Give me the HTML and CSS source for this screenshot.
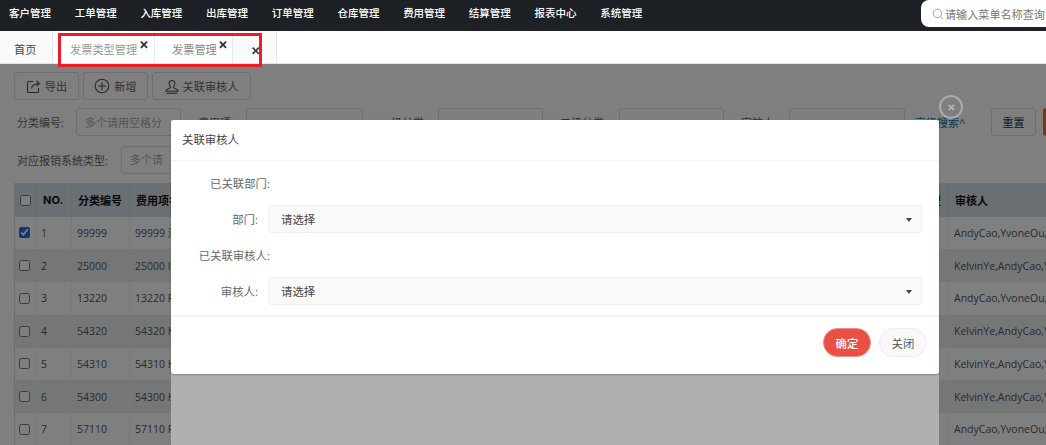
FILE: index.html
```html
<!DOCTYPE html>
<html lang="en">
<head>
    <meta charset="UTF-8">
    <meta name="viewport" content="width=device-width, initial-scale=1.0">
    <title>发票类型管理</title>
    <link rel="stylesheet" href="styles.css">
</head>
<body>
    <!-- Top menu -->
    <div class="topbar">
        <div class="menu">
            <a>客户管理</a>
            <a>工单管理</a>
            <a>入库管理</a>
            <a>出库管理</a>
            <a>订单管理</a>
            <a>仓库管理</a>
            <a>费用管理</a>
            <a>结算管理</a>
            <a>报表中心</a>
            <a>系统管理</a>
        </div>
        <div class="menu-search">
            <svg width="12" height="12" viewBox="0 0 13 13" fill="none" stroke="#999" stroke-width="1"><circle cx="5.8" cy="5.8" r="4.6"/><path d="M9.2 9.2 12 12"/></svg>
            <span>请输入菜单名称查询</span>
        </div>
    </div>

    <!-- Tabs -->
    <div class="tabs">
        <div class="tab tab-home">首页</div>
        <div class="tab tab-first">发票类型管理
            <svg class="tab-x" viewBox="0 0 8 8"><path d="M1.4 0 4 2.6 6.6 0 8 1.4 5.4 4 8 6.6 6.6 8 4 5.4 1.4 8 0 6.6 2.6 4 0 1.4z"/></svg>
        </div>
        <div class="tab tab-second">发票管理
            <svg class="tab-x" viewBox="0 0 8 8"><path d="M1.4 0 4 2.6 6.6 0 8 1.4 5.4 4 8 6.6 6.6 8 4 5.4 1.4 8 0 6.6 2.6 4 0 1.4z"/></svg>
        </div>
        <div class="tab tab-more">
            <svg class="more-x" viewBox="0 0 8 8"><path d="M1.4 0 4 2.6 6.6 0 8 1.4 5.4 4 8 6.6 6.6 8 4 5.4 1.4 8 0 6.6 2.6 4 0 1.4z"/></svg>
        </div>
    </div>

    <!-- Page behind the dialog -->
    <div class="content">
        <div class="toolbar">
            <button class="tool-btn btn-export">
                <svg width="15" height="15" viewBox="0 0 15 15" fill="none" stroke="#555" stroke-width="1.1"><path d="M7 2.5H2.5a1 1 0 0 0-1 1v9a1 1 0 0 0 1 1h9a1 1 0 0 0 1-1V9"/><path d="M5.5 9.5c.4-3 2.500-4.700 7.500-5M10.500 1.800 13.300 4.500 10.500 7"/></svg>
                导出
            </button>
            <button class="tool-btn btn-add">
                <svg width="16" height="16" viewBox="0 0 16 16" fill="none" stroke="#555" stroke-width="1.1"><circle cx="8" cy="8" r="6.800"/><path d="M8 4v8M4 8h8"/></svg>
                新增
            </button>
            <button class="tool-btn btn-link">
                <svg width="14" height="15" viewBox="0 0 14 15" fill="none" stroke="#555" stroke-width="1.1"><path d="M7 1.500c-1.700 0-2.800 1.200-2.800 2.800 0 2 1.300 2.600 1.300 3.900 0 1-1 1.300-2.500 1.800C1.800 10.400 1 11 1 12.300h12c0-1.300-.8-1.900-2-2.300-1.500-.5-2.500-.8-2.500-1.800 0-1.300 1.300-1.900 1.300-3.900C9.800 2.700 8.700 1.500 7 1.500z"/><path d="M1.500 14.300h11"/></svg>
                关联审核人
            </button>
        </div>

        <div class="filters">
            <label class="f-label">分类编号:</label>
            <input class="f-input" placeholder="多个请用空格分">
            <label class="f-label">费用项</label>
            <input class="f-input">
            <label class="f-label">一级分类</label>
            <input class="f-input">
            <label class="f-label">二级分类</label>
            <input class="f-input">
            <label class="f-label">审核人</label>
            <input class="f-input">
            <a class="f-more">高级搜索^</a>
            <button class="f-reset">重置</button>
            <button class="f-search" aria-label="搜索"></button>
        </div>

        <div class="filters-second">
            <label class="f-label">对应报销系统类型:</label>
            <input class="f-input f-input-wide" placeholder="多个请">
        </div>

        <table class="grid">
            <colgroup>
                <col class="c-check"><col class="c-no"><col class="c-code"><col class="c-name"><col class="c-type"><col class="c-user">
            </colgroup>
            <thead>
                <tr><th><input type="checkbox"></th><th class="th-no">NO.</th><th>分类编号</th><th>费用项名称</th><th class="th-type">系统类型</th><th>审核人</th></tr>
            </thead>
            <tbody>
                <tr><td><input type="checkbox" checked></td><td>1</td><td>99999</td><td>99999 测试</td><td></td><td>AndyCao,YvoneOu,JackZhang</td></tr>
                <tr><td><input type="checkbox"></td><td>2</td><td>25000</td><td>25000 Ins</td><td></td><td>KelvinYe,AndyCao,YvoneOu</td></tr>
                <tr><td><input type="checkbox"></td><td>3</td><td>13220</td><td>13220 Pay</td><td></td><td>AndyCao,YvoneOu,JackZhang</td></tr>
                <tr><td><input type="checkbox"></td><td>4</td><td>54320</td><td>54320 Hot</td><td></td><td>KelvinYe,AndyCao,YvoneOu</td></tr>
                <tr><td><input type="checkbox"></td><td>5</td><td>54310</td><td>54310 Hot</td><td></td><td>KelvinYe,AndyCao,YvoneOu</td></tr>
                <tr><td><input type="checkbox"></td><td>6</td><td>54300</td><td>54300 Hot</td><td></td><td>KelvinYe,AndyCao,YvoneOu</td></tr>
                <tr><td><input type="checkbox"></td><td>7</td><td>57110</td><td>57110 Ren</td><td></td><td>AndyCao,YvoneOu,JackZhang</td></tr>
            </tbody>
        </table>
    </div>

    <div class="backdrop"></div>

    <!-- Dialog -->
    <div class="modal-wrap">
        <div class="dialog">
            <div class="dialog-head">关联审核人</div>
            <div class="dialog-body">
                <div class="d-row"><span class="d-label">已关联部门:</span></div>
                <div class="d-row d-row-select">
                    <span class="d-label d-label-short">部门:</span>
                    <div class="d-select">请选择<i class="caret"></i></div>
                </div>
                <div class="d-row"><span class="d-label">已关联审核人:</span></div>
                <div class="d-row d-row-select">
                    <span class="d-label d-label-short">审核人:</span>
                    <div class="d-select">请选择<i class="caret"></i></div>
                </div>
            </div>
            <div class="dialog-foot">
                <button class="btn-ok">确定</button>
                <button class="btn-close">关闭</button>
            </div>
        </div>
    </div>

    <div class="modal-close">
        <svg width="9" height="9" viewBox="0 0 10 10" stroke="#b4b4b4" stroke-width="2"><path d="M2 2l6 6M8 2l-6 6"/></svg>
    </div>

    <!-- Red marker drawn on the screenshot -->
    <div class="marker"></div>
</body>
</html>
```

FILE: styles.css
```css
* {
    box-sizing: border-box;
}

body {
    font-family: "Open Sans", "Noto Sans CJK SC", sans-serif;
    font-size: 11px;
    color: #666;
    margin: 0;
    height: 445px;
    overflow: hidden;
    position: relative;
    background-color: #fff;
}

/* Top menu */
.topbar {
    height: 31px;
    background-color: #1d2125;
    display: flex;
    justify-content: space-between;
    align-items: flex-start;
}

.menu {
    display: flex;
    padding-left: 9px;
    gap: 24.400px;
}

.menu a {
    color: #fff;
    font-size: 10.500px;
    font-weight: 500;
    line-height: 27px;
    width: 41.300px;
    white-space: nowrap;
}

.menu-search {
    width: 125px;
    height: 27px;
    background-color: #fff;
    border-radius: 8px 0 0 8px;
    display: flex;
    align-items: center;
    padding-left: 11px;
    gap: 1px;
    color: #777;
    font-size: 11.100px;
    white-space: nowrap;
}

.menu-search svg {
    flex: none;
}

/* Tabs */
.tabs {
    height: 33px;
    display: flex;
    border-bottom: 1px solid #e4e4e4;
}

.tab {
    position: relative;
    font-size: 11.200px;
    line-height: 37px;
    border-right: 1px solid #e6e9f0;
    background-color: #fafafa;
    color: #444;
}

.tab-home {
    width: 53px;
    padding-left: 14px;
}

.tab-first {
    width: 102px;
    padding-left: 17px;
    background-color: #fff;
    color: #999;
}

.tab-second {
    width: 78px;
    padding-left: 17px;
    background-color: #fff;
    color: #888;
}

.tab-more {
    width: 44px;
}

.tab-x {
    position: absolute;
    top: 10px;
    right: 6px;
    width: 8px;
    height: 7.500px;
    fill: #333;
}

.tab-second .tab-x {
    right: 5px;
}

.more-x {
    position: absolute;
    top: 16px;
    left: 19px;
    width: 7.500px;
    height: 7.500px;
    fill: #444;
}

/* Page behind the dialog */
.content {
    padding-top: 8px;
    color: #666;
}

.toolbar {
    display: flex;
    gap: 4px;
    padding-left: 14px;
    height: 28px;
}

.tool-btn {
    display: flex;
    align-items: center;
    justify-content: center;
    gap: 4px;
    height: 28px;
    font-family: inherit;
    font-size: 11.200px;
    color: #666;
    background-color: #fff;
    border: 1px solid #ddd;
    border-radius: 3px;
    padding: 0;
}

.btn-export {
    width: 65px;
}

.btn-add {
    width: 65px;
}

.btn-link {
    width: 99px;
}

.filters {
    display: grid;
    grid-template-columns: 76px 105px 65px 117px 75px 105px 76px 105px 65px 116px 86px 45px 10px;
    align-items: center;
    margin-top: 8px;
    height: 28px;
}

.f-label {
    flex: none;
    padding-left: 17px;
    white-space: nowrap;
}

.f-input {
    height: 28px;
    width: 100%;
    font-family: inherit;
    font-size: 11px;
    background-color: #fff;
    border: 1px solid #ddd;
    border-radius: 3px;
    padding: 0 8px;
}

.f-input::placeholder {
    color: #aaa;
}

.f-more {
    padding-left: 10px;
    color: #0a6f9e;
    white-space: nowrap;
}

.f-reset {
    height: 28px;
    font-family: inherit;
    font-size: 11px;
    color: #333;
    background-color: #fff;
    border: 1px solid #ddd;
    border-radius: 3px;
    padding: 0;
}

.f-search {
    height: 28px;
    margin-left: 7px;
    width: 3px;
    background-color: #e8703a;
    border: 0;
    border-radius: 3px 0 0 3px;
    padding: 0;
}

.filters-second {
    display: flex;
    align-items: center;
    height: 29px;
    margin-top: 9px;
}

.filters-second .f-label {
    width: 121px;
}

.f-input-wide {
    width: 110px;
}

/* Table */
.grid {
    table-layout: fixed;
    border-collapse: collapse;
    margin: 9px 0 0 14px;
    width: 1032px;
    font-size: 10.500px;
    border: 1px solid #ddd;
    border-right: 0;
}

.c-check { width: 21px; }
.c-no { width: 36px; }
.c-code { width: 58px; }
.c-name { width: 400px; }
.c-type { width: 419px; }
.c-user { width: 98px; }

.grid th {
    height: 33px;
    text-align: left;
    padding: 0 5px 0 6px;
    font-size: 11px;
    font-weight: 700;
    color: #111;
    background-color: #d2dfe4;
    border-right: 1px solid #ccd6da;
    white-space: nowrap;
}

.grid th.th-no {
    font-family: "Inter", sans-serif;
    padding-left: 7px;
}

.grid th.th-type {
    text-align: right;
    padding-right: 7px;
}

.grid td {
    height: 32.750px;
    padding: 0 0 0 5px;
    color: #555;
    border-right: 1px solid #f0f0f0;
    white-space: nowrap;
    overflow: hidden;
}

.grid tbody tr:nth-child(odd) td {
    background-color: #fdfffe;
}

.grid tbody tr:nth-child(even) td {
    background-color: #ebefee;
}

.grid input {
    display: block;
    width: 11px;
    height: 11px;
    margin: 0 0 0 -1px;
    accent-color: #2f6fd8;
}

/* Dialog */
.backdrop {
    position: absolute;
    left: 0;
    right: 0;
    top: 64px;
    bottom: 0;
    background-color: rgba(0, 0, 0, 0.5);
}

.modal-wrap {
    position: absolute;
    left: 171px;
    top: 120px;
    width: 768px;
    bottom: 0;
    background-color: #b0b0b0;
}

.dialog {
    height: 254px;
    background-color: #fff;
    border-radius: 3px;
    box-shadow: 0 1px 2px rgba(0, 0, 0, 0.25);
    color: #666;
}

.dialog-head {
    height: 41px;
    line-height: 40px;
    padding-left: 11px;
    font-size: 11.400px;
    color: #444;
    border-bottom: 1px solid #f2f2f6;
}

.dialog-body {
    height: 156px;
    padding: 4px 17px 0 0;
    border-bottom: 2px solid #f4f4f6;
}

.d-row {
    display: flex;
    align-items: center;
    height: 36px;
    justify-content: flex-start;
}

.d-label {
    width: 99px;
    text-align: right;
    font-size: 11.400px;
    white-space: nowrap;
}

.d-label-short {
    width: 87px;
    margin-right: 10px;
}

.d-select {
    position: relative;
    flex: 1;
    height: 28px;
    line-height: 27px;
    padding-left: 12px;
    font-size: 11.400px;
    color: #444;
    background-color: #f9f9f9;
    border: 1px solid #f1f1f5;
    border-radius: 3px;
}

.caret {
    position: absolute;
    right: 9px;
    top: 12px;
    border-left: 3.500px solid transparent;
    border-right: 3.500px solid transparent;
    border-top: 4px solid #444;
}

.dialog-foot {
    display: flex;
    justify-content: flex-end;
    gap: 8px;
    padding: 11px 12px 0 0;
}

.btn-ok,
.btn-close {
    width: 48px;
    height: 29px;
    font-family: inherit;
    font-size: 11.400px;
    border-radius: 15px;
    padding: 0;
}

.btn-ok {
    color: #fff;
    font-weight: 500;
    background-color: #e94f43;
    border: 1px solid #f08d85;
}

.btn-close {
    color: #555;
    background-color: #f9f9fa;
    border: 1px solid #eeeef2;
}

.modal-close {
    position: absolute;
    left: 939px;
    top: 95px;
    width: 24px;
    height: 24px;
    border: 2px solid #aaa;
    border-radius: 50%;
    display: flex;
    align-items: center;
    justify-content: center;
}

.marker {
    position: absolute;
    left: 58px;
    top: 33px;
    width: 204px;
    height: 34px;
    border: 3px solid #ee1c25;
}
```
